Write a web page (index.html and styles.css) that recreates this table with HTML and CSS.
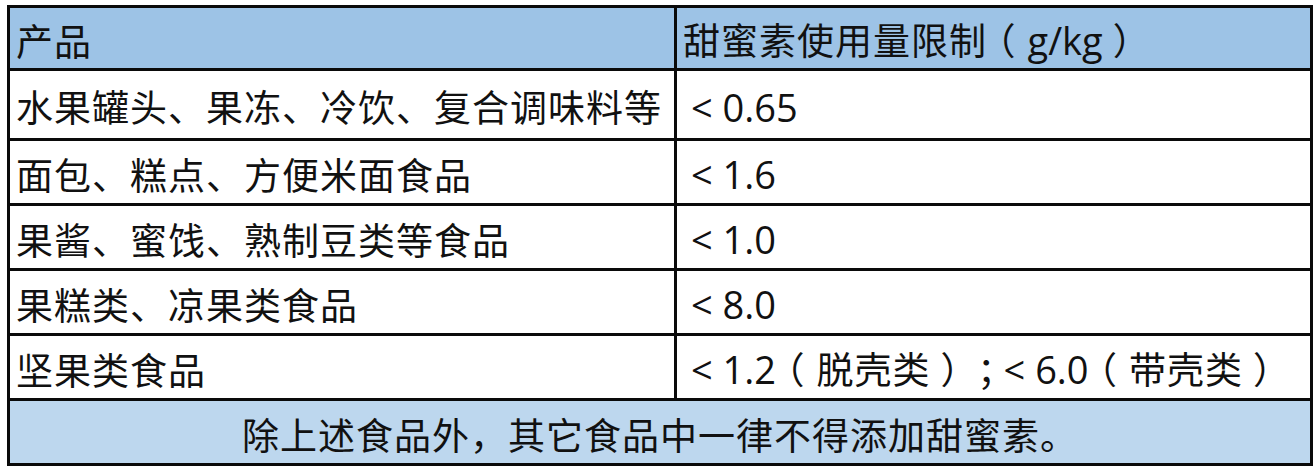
FILE: index.html
```html
<!DOCTYPE html>
<html lang="zh-CN">
<head>
<meta charset="utf-8">
<link rel="stylesheet" href="styles.css">
</head>
<body>
<div class="frame">
<table class="limits">
  <colgroup><col class="c1"><col class="c2"></colgroup>
  <thead>
    <tr class="head"><th>产品</th><th>甜蜜素使用量限制<span class="pn">（</span><span class="lat">g/kg</span><span class="pn">）</span></th></tr>
  </thead>
  <tbody>
    <tr class="r1"><td>水果罐头、果冻、冷饮、复合调味料等</td><td class="num"><span class="lat">&lt; 0.65</span></td></tr>
    <tr><td>面包、糕点、方便米面食品</td><td class="num"><span class="lat">&lt; 1.6</span></td></tr>
    <tr><td>果酱、蜜饯、熟制豆类等食品</td><td class="num"><span class="lat">&lt; 1.0</span></td></tr>
    <tr><td>果糕类、凉果类食品</td><td class="num"><span class="lat">&lt; 8.0</span></td></tr>
    <tr><td>坚果类食品</td><td class="num"><span class="lat">&lt; 1.2</span><span class="pn">（</span>脱壳类<span class="pn">）</span><span class="pn semi">；</span><span class="lat">&lt; 6.0</span><span class="pn">（</span>带壳类<span class="pn">）</span></td></tr>
    <tr class="foot"><td colspan="2">除上述食品外，其它食品中一律不得添加甜蜜素。</td></tr>
  </tbody>
</table>
</div>
</body>
</html>
```
FILE: styles.css
```css
html, body {
  margin: 0;
  padding: 0;
  background: #ffffff;
}
.frame {
  padding: 5px 0 0 7px;
}
.limits {
  border-collapse: collapse;
  table-layout: fixed;
  width: 1303px;
  font-family: "Noto Sans CJK SC", "Microsoft YaHei", sans-serif;
  font-size: 37px;
  color: #111;
  border: 3px solid #0a0a0a;
}
.c1 { width: 667px; }
.c2 { width: 636px; }
.limits th, .limits td {
  border: 3px solid #0a0a0a;
  padding: 4px 0 0 6px;
  text-align: left;
  font-weight: 400;
  vertical-align: middle;
  white-space: nowrap;
  line-height: 1;
  letter-spacing: 1px;
}
.head th {
  background: #9dc3e6;
  height: 56px;
}
.limits tbody tr td {
  height: 58px;
}
.limits tbody tr.r1 td { height: 63px; }
.limits td.num { padding-left: 14px; }
.lat {
  font-family: "Open Sans", "Noto Sans", sans-serif;
  letter-spacing: 0;
  font-size: 38px;
  line-height: 1;
}
.pn {
  font-feature-settings: "halt" 1;
  letter-spacing: 0;
  margin: 0 12px 0 10px;
}
.pn.semi { margin: 0 8px 0 6px; }
.foot td {
  background: #bdd7ee;
  text-align: center;
  padding-left: 0;
  letter-spacing: 1px;
  height: 59px;
}
```
